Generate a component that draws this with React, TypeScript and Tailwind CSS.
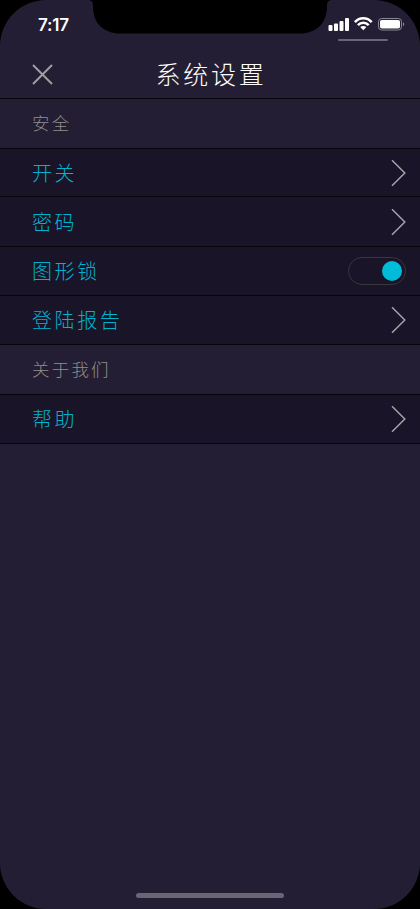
import { useState } from "react";
import clsx from "clsx";

function Notch() {
  return (
    <svg className="absolute left-[87px] top-0" width="246" height="34" viewBox="0 0 246 34" fill="#000">
      <path d="M0 0C4.500 0 6 1.500 6 6C6 23 16 33.500 34 33.500H212C230 33.500 240 23 240 6C240 1.500 241.500 0 246 0Z" />
    </svg>
  );
}

function StatusIcons() {
  return (
    <svg width="78" height="16" viewBox="0 0 78 16" fill="none">
      <g fill="#fff">
        <rect x="0.500" y="9" width="4" height="6" rx="1" />
        <rect x="6" y="7.500" width="4" height="7.500" rx="1" />
        <rect x="11.500" y="5" width="4" height="10" rx="1" />
        <rect x="17" y="2" width="4" height="13" rx="1" />
      </g>
      <g stroke="#fff" strokeWidth="2.500">
        <path d="M26.900 6.100C31.500 0.900 39.100 0.900 43.700 6.100" />
        <path d="M29.900 9.200C32.900 5.900 37.700 5.900 40.700 9.200" />
      </g>
      <path d="M35.300 14.200L32.200 11.100C34 9.500 36.600 9.500 38.400 11.100Z" fill="#fff" />
      <rect x="50.500" y="2.500" width="23" height="11.500" rx="3.200" stroke="#8b8894" />
      <rect x="52" y="4" width="20" height="8.500" rx="1.800" fill="#fff" />
      <path d="M75 6.300C76.700 6.800 76.700 9.700 75 10.200Z" fill="#8b8894" />
    </svg>
  );
}

function Chevron() {
  return (
    <svg width="16" height="28" viewBox="0 0 16 28" fill="none" stroke="#a5a3a6" strokeWidth="1.500">
      <path d="M2 1.300L14.800 14L2 26.700" />
    </svg>
  );
}

function Toggle() {
  const [on, setOn] = useState(true);

  return (
    <button
      onClick={() => setOn(!on)}
      className={clsx(
        "flex h-[28px] w-[58px] items-center rounded-full border border-[#38353c] px-[3px]",
        on ? "justify-end" : "justify-start"
      )}
    >
      <span className="size-[20px] rounded-full bg-[#00bcd9]" />
    </button>
  );
}

interface RowProps {
  label: string;
  className: string;
  toggle?: boolean;
}

function Row({ label, className, toggle }: RowProps) {
  return (
    <div
      className={clsx(
        "flex items-center justify-between border-b border-[#07050b] bg-[#1a1428] pl-[32px] pr-[14px]",
        className
      )}
    >
      <span className="text-[20px] leading-none tracking-[2.6px] text-[#00b2cf]">{label}</span>
      {toggle ? <Toggle /> : <Chevron />}
    </div>
  );
}

function Section({ label }: { label: string }) {
  return (
    <div className="flex h-[50px] items-center border-b border-[#07050b] pb-[2px] pl-[32px] text-[17.5px] leading-none tracking-[2.2px] text-[#918d8c]">
      {label}
    </div>
  );
}

export default function App() {
  return (
    <div className="h-[909px] w-[420px] bg-black">
      <div className="relative flex h-full flex-col overflow-hidden rounded-[46px] bg-[#231e33] font-['Noto_Sans_CJK_SC',sans-serif] font-light">
        <Notch />
        <div className="flex h-[50px] shrink-0 items-start justify-between pl-[38px] pr-[14px] pt-[15px]">
          <span className="font-['Inter',sans-serif] text-[17px] font-semibold leading-[20px] tracking-[-0.2px] text-white">
            7:17
          </span>
          <div className="flex flex-col pt-px">
            <StatusIcons />
            <div className="ml-[10px] mt-[7px] h-[2px] w-[50px] rounded-full bg-[#69657a]" />
          </div>
        </div>

        <header className="relative flex h-[49px] shrink-0 items-center justify-center border-b border-[#07050b] pb-[2px] pl-[2px]">
          <button className="absolute left-[32px] top-[14px]">
            <svg width="21" height="21" viewBox="0 0 21 21" fill="none" stroke="#a19e9d" strokeWidth="2">
              <path d="M1 1L20 20M20 1L1 20" />
            </svg>
          </button>
          <h1 className="text-[25px] leading-none tracking-[2.8px] text-white">系统设置</h1>
        </header>

        <Section label="安全" />
        <Row label="开关" className="h-[48px]" />
        <Row label="密码" className="h-[50px]" />
        <Row label="图形锁" className="h-[49px]" toggle />
        <Row label="登陆报告" className="h-[49px]" />
        <Section label="关于我们" />
        <Row label="帮助" className="h-[49px]" />

        <div className="mt-auto flex justify-center pb-[11px]">
          <div className="h-[5px] w-[148px] rounded-full bg-[#696575]" />
        </div>
      </div>
    </div>
  );
}
